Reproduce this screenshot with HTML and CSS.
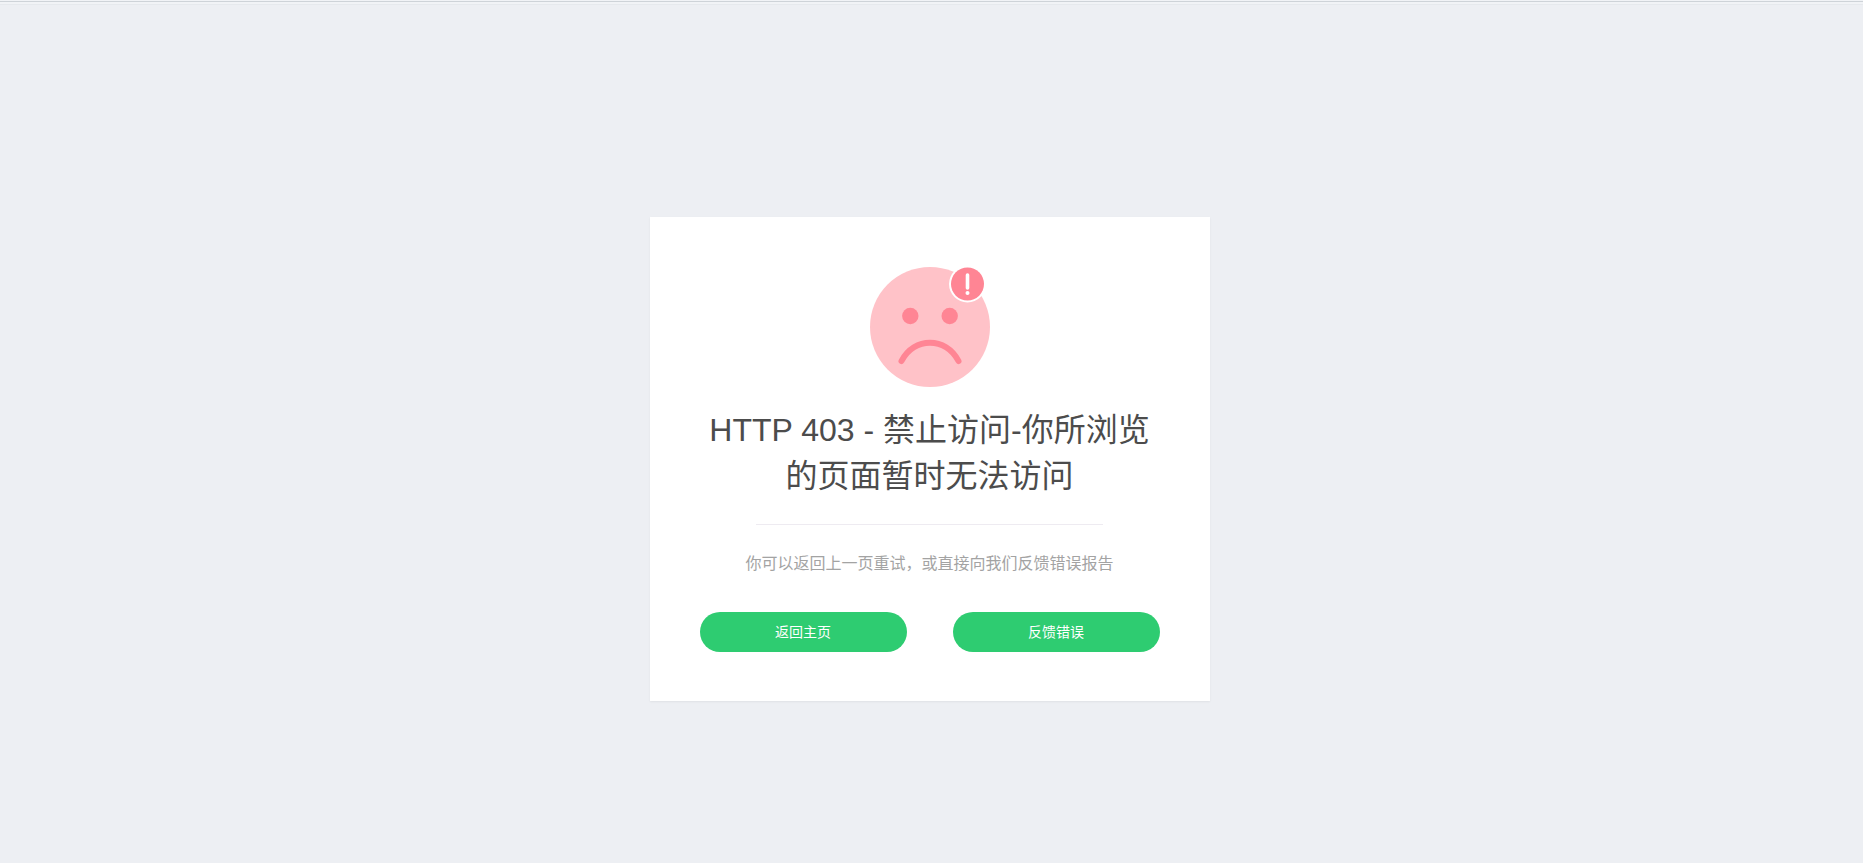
FILE: index.html
```html
<!DOCTYPE html>
<html lang="zh-CN">
<head>
<meta charset="utf-8">
<title>HTTP 403</title>
<link rel="stylesheet" href="styles.css">
</head>
<body>
<main class="card">
  <svg class="face" viewBox="0 0 120 120" width="120" height="120" aria-hidden="true">
    <circle cx="60" cy="60" r="60" fill="#ffc2c8"/>
    <circle cx="40.3" cy="49" r="8.2" fill="#ff8594"/>
    <circle cx="79.7" cy="49" r="8.2" fill="#ff8594"/>
    <path d="M31.500 94C44 69.500 76 69.500 88.500 94" fill="none" stroke="#ff8594" stroke-width="6" stroke-linecap="round"/>
    <circle cx="97.500" cy="17" r="18.500" fill="#fff"/>
    <circle cx="97.500" cy="17" r="16.500" fill="#ff8594"/>
    <path d="M97.500 8V21" stroke="#fff" stroke-width="3.600" stroke-linecap="round"/>
    <circle cx="97.500" cy="26" r="2" fill="#fff"/>
  </svg>
  <h1 class="title">HTTP 403 - 禁止访问-你所浏览的页面暂时无法访问</h1>
  <hr class="divider">
  <p class="hint">你可以返回上一页重试，或直接向我们反馈错误报告</p>
  <div class="actions">
    <a class="button">返回主页</a>
    <a class="button">反馈错误</a>
  </div>
</main>
</body>
</html>
```
FILE: styles.css
```css
* { box-sizing: border-box; }
body {
  margin: 0;
  height: 863px;
  padding: 217px 4px 0 0;
  background: linear-gradient(#f1f3f6 1px, #ced3d8 1px, #ced3d8 2px, #f1f3f6 2px, #f1f3f6 4px, #e6e9ed 4px, #e6e9ed 5px, #edeff3 5px);
  font-family: "Liberation Sans", "Noto Sans CJK SC", sans-serif;
}
.card {
  width: 560px;
  height: 484px;
  margin: 0 auto;
  padding: 50px;
  background: #fff;
  box-shadow: 0 1px 2px rgba(0, 0, 0, .06);
  text-align: center;
}
.face { display: block; margin: 0 auto; }
.title {
  margin: 20px 0 0;
  font-size: 32px;
  font-weight: 400;
  line-height: 46px;
  color: #4c4c4c;
}
.divider {
  width: 347px;
  margin: 25px auto 0;
  border: 0;
  border-top: 1px solid #eeebf1;
}
.hint {
  margin: 27px 0 0;
  font-size: 16px;
  line-height: 24px;
  font-weight: 400;
  color: #a3a3a3;
}
.actions {
  display: flex;
  justify-content: space-between;
  margin-top: 36px;
}
.button {
  width: 207px;
  height: 40px;
  border-radius: 20px;
  background: #2ecc71;
  color: #fff;
  font-size: 14px;
  line-height: 40px;
}
```
